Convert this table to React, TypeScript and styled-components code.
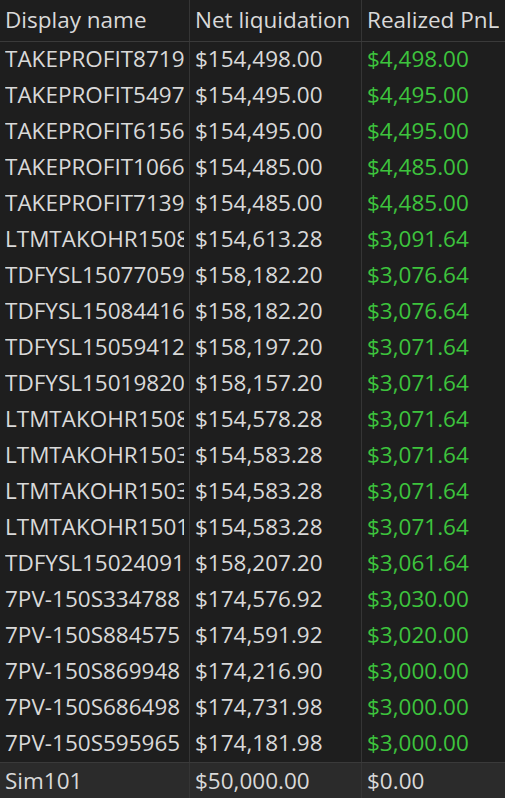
import styled, { createGlobalStyle } from 'styled-components';

const GlobalStyle = createGlobalStyle`
  html, body {
    margin: 0;
    padding: 0;
    background: #1e1e1e;
  }
`;

const Table = styled.div`
  width: 505px;
  height: 798px;
  overflow: hidden;
  background: #1e1e1e;
  font-family: 'Open Sans', 'Noto Sans', sans-serif;
  font-size: 22.5px;
  color: #d9d9d9;
`;

const Row = styled.div<{ $kind?: 'head' | 'total' }>`
  display: grid;
  grid-template-columns: 190px 172px 143px;
  height: ${p => (p.$kind === 'head' ? '41px' : p.$kind === 'total' ? '38px' : '36px')};
  background: ${p => (p.$kind === 'total' ? '#2b2b2b' : 'transparent')};
  border-bottom: ${p => (p.$kind === 'head' ? '1px solid #3a3a3a' : 'none')};
  border-top: ${p => (p.$kind === 'total' ? '1px solid #3a3a3a' : 'none')};
`;

const Cell = styled.div<{ $gain?: boolean; $last?: boolean }>`
  display: flex;
  align-items: center;
  min-width: 0;
  padding: 0 5px 3px 5px;
  white-space: nowrap;
  overflow: hidden;
  border-right: ${p => (p.$last ? 'none' : '1px solid #353535')};
  color: ${p => (p.$gain ? '#3dc43d' : 'inherit')};
`;

const Clip = styled.span`
  overflow: hidden;
  max-width: 100%;
`;

const rows: [string, string, string][] = [
  ['TAKEPROFIT8719', '$154,498.00', '$4,498.00'],
  ['TAKEPROFIT5497', '$154,495.00', '$4,495.00'],
  ['TAKEPROFIT6156', '$154,495.00', '$4,495.00'],
  ['TAKEPROFIT1066', '$154,485.00', '$4,485.00'],
  ['TAKEPROFIT7139', '$154,485.00', '$4,485.00'],
  ['LTMTAKOHR1508', '$154,613.28', '$3,091.64'],
  ['TDFYSL15077059', '$158,182.20', '$3,076.64'],
  ['TDFYSL15084416', '$158,182.20', '$3,076.64'],
  ['TDFYSL15059412', '$158,197.20', '$3,071.64'],
  ['TDFYSL15019820', '$158,157.20', '$3,071.64'],
  ['LTMTAKOHR1508', '$154,578.28', '$3,071.64'],
  ['LTMTAKOHR1503', '$154,583.28', '$3,071.64'],
  ['LTMTAKOHR1503', '$154,583.28', '$3,071.64'],
  ['LTMTAKOHR1501', '$154,583.28', '$3,071.64'],
  ['TDFYSL15024091', '$158,207.20', '$3,061.64'],
  ['7PV-150S334788', '$174,576.92', '$3,030.00'],
  ['7PV-150S884575', '$174,591.92', '$3,020.00'],
  ['7PV-150S869948', '$174,216.90', '$3,000.00'],
  ['7PV-150S686498', '$174,731.98', '$3,000.00'],
  ['7PV-150S595965', '$174,181.98', '$3,000.00'],
];

export default function App() {
  return (
    <>
      <GlobalStyle />
      <Table>
        <Row $kind="head">
          <Cell><Clip>Display name</Clip></Cell>
          <Cell><Clip>Net liquidation</Clip></Cell>
          <Cell $last><Clip>Realized PnL</Clip></Cell>
        </Row>
        {rows.map((r, i) => (
          <Row key={i}>
            <Cell><Clip>{r[0]}</Clip></Cell>
            <Cell><Clip>{r[1]}</Clip></Cell>
            <Cell $gain $last><Clip>{r[2]}</Clip></Cell>
          </Row>
        ))}
        <Row $kind="total">
          <Cell><Clip>Sim101</Clip></Cell>
          <Cell><Clip>$50,000.00</Clip></Cell>
          <Cell $last><Clip>$0.00</Clip></Cell>
        </Row>
      </Table>
    </>
  );
}
